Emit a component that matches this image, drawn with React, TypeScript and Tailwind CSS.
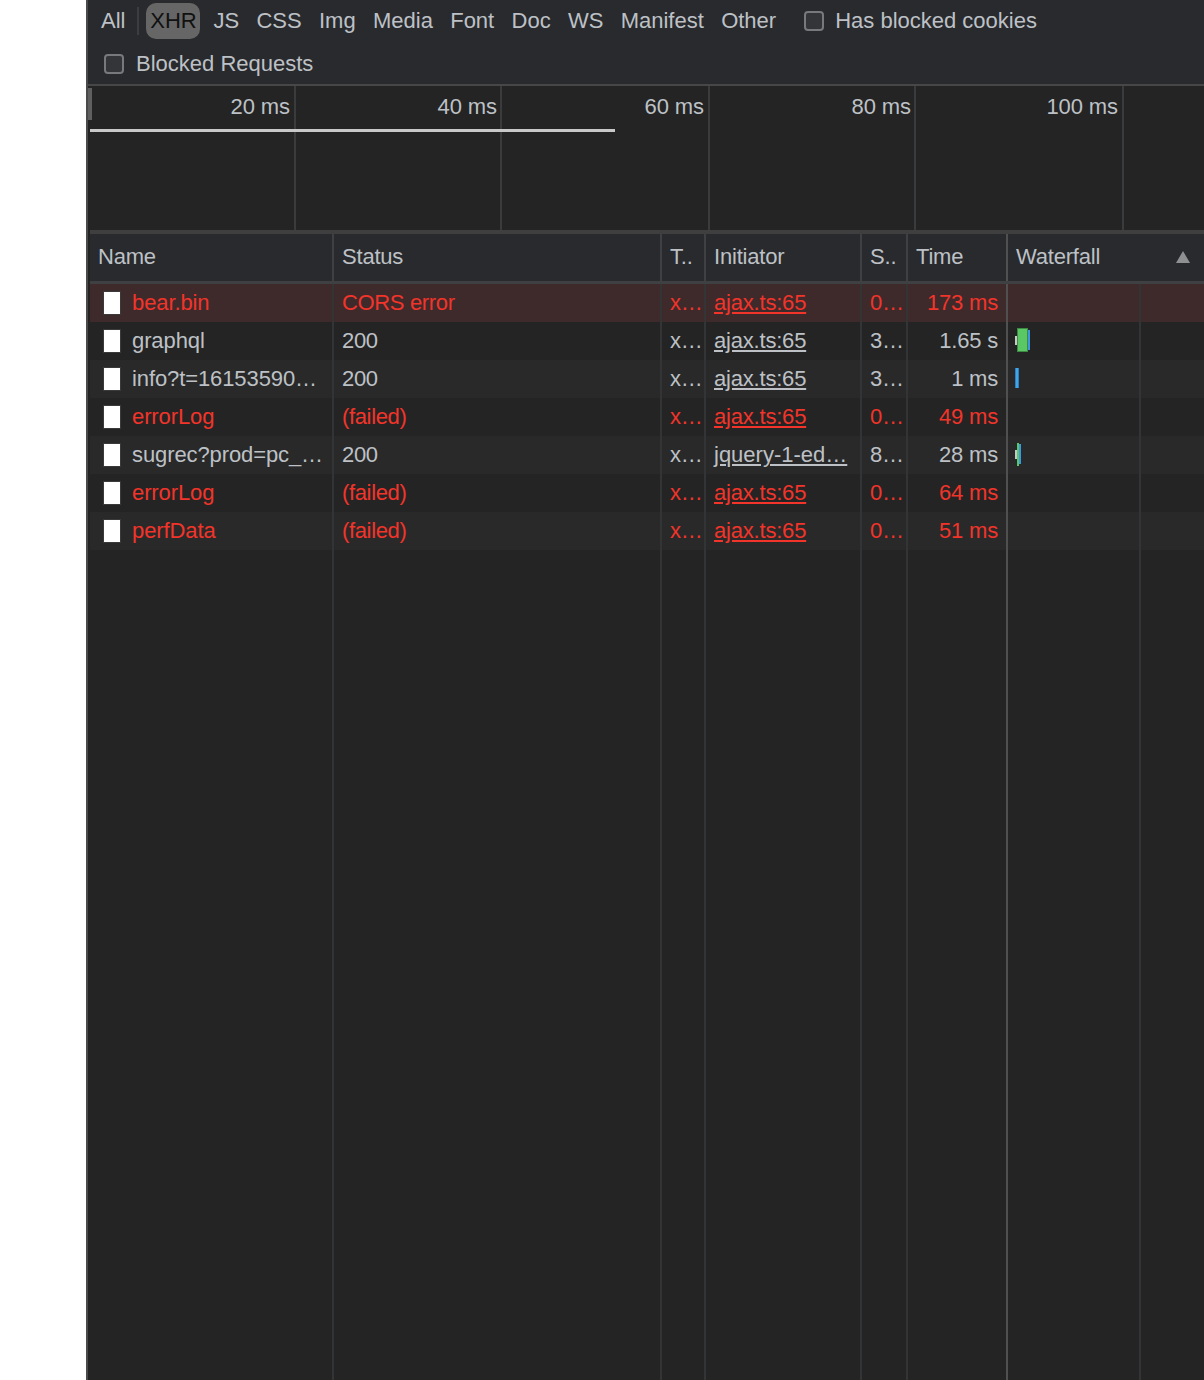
const font = "font-['Liberation_Sans',Arial,sans-serif]";

const filters = ['JS', 'CSS', 'Img', 'Media', 'Font', 'Doc', 'WS', 'Manifest', 'Other'];
const ticks = [
  { label: '20 ms', w: 'w-[206px]', pr: 'pr-[4px]' },
  { label: '40 ms', w: 'w-[206px]', pr: 'pr-[3px]' },
  { label: '60 ms', w: 'w-[208px]', pr: 'pr-[4px]' },
  { label: '80 ms', w: 'w-[206px]', pr: 'pr-[3px]' },
  { label: '100 ms', w: 'w-[208px]', pr: 'pr-[4px]' },
];

const cols = 'grid grid-cols-[244px_328px_44px_156px_46px_100px_1fr]';

const requests = [
  { name: 'bear.bin', status: 'CORS error', type: 'x…', init: 'ajax.ts:65', size: '0…', time: '173 ms', err: true, bar: null },
  { name: 'graphql', status: '200', type: 'x…', init: 'ajax.ts:65', size: '3…', time: '1.65 s', err: false, bar: 'big' },
  { name: 'info?t=16153590…', status: '200', type: 'x…', init: 'ajax.ts:65', size: '3…', time: '1 ms', err: false, bar: 'blue' },
  { name: 'errorLog', status: '(failed)', type: 'x…', init: 'ajax.ts:65', size: '0…', time: '49 ms', err: true, bar: null },
  { name: 'sugrec?prod=pc_…', status: '200', type: 'x…', init: 'jquery-1-ed…', size: '8…', time: '28 ms', err: false, bar: 'thin' },
  { name: 'errorLog', status: '(failed)', type: 'x…', init: 'ajax.ts:65', size: '0…', time: '64 ms', err: true, bar: null },
  { name: 'perfData', status: '(failed)', type: 'x…', init: 'ajax.ts:65', size: '0…', time: '51 ms', err: true, bar: null },
];

function Checkbox() {
  return <span className="w-[20px] h-[20px] rounded-[4px] border-2 border-[#77797c] bg-[#333538]" />;
}

function WaterfallBar({ kind }: { kind: string | null }) {
  if (kind === 'big') {
    return (
      <div className="flex items-center h-full pl-[7px] pb-[2px]">
        <span className="w-[2px] h-[9px] bg-[#c8c8c8]" />
        <span className="w-[11px] h-[24px] bg-[#5ac864] border border-[#3c8a44]" />
        <span className="w-[2px] h-[20px] bg-[#3d98e0]" />
      </div>
    );
  }
  if (kind === 'blue') {
    return (
      <div className="flex items-center h-full pl-[7px] pb-[3px]">
        <span className="w-[4px] h-[20px] bg-[#3fa6ec] border-x border-[#2d7fc0]" />
      </div>
    );
  }
  if (kind === 'thin') {
    return (
      <div className="flex items-center h-full pl-[7px] pb-[2px]">
        <span className="w-[2px] h-[9px] bg-[#c8c8c8]" />
        <span className="w-[2px] h-[23px] bg-[#5ac864]" />
        <span className="w-[2px] h-[20px] bg-[#3d98e0]" />
      </div>
    );
  }
  return null;
}

const cell = 'border-r-2 border-[#333436] px-2 whitespace-nowrap overflow-hidden';
const headCell = 'border-r-2 border-[#3f4042] px-2 pb-[1px] whitespace-nowrap overflow-hidden flex items-center';
const timeCell = 'border-r-2 border-[#505050] px-2 whitespace-nowrap overflow-hidden';

export default function App() {
  return (
    <div className={`${font} flex h-[1380px] w-[1204px] overflow-hidden bg-white text-[22px] leading-none text-[#bdc1c6]`}>
      <div className="w-[86px] shrink-0 bg-white" />
      <div className="flex flex-1 flex-col min-w-0 bg-[#242424] border-l-2 border-[#4a4a4a] pl-[2px]">
        {/* filter bar */}
        <div className="-ml-[2px] h-[86px] shrink-0 bg-[#292a2d] border-b-2 border-[#474747]">
          <div className="flex items-center h-[42px] pl-[13px]">
            <span>All</span>
            <span className="ml-[12px] w-[2px] h-[28px] bg-[#3c3d40]" />
            <span className="ml-[7px] flex items-center justify-center w-[54px] h-[36px] rounded-[10px] bg-[#666666] text-[#111111]">XHR</span>
            <div className="ml-[13px] flex gap-[17.3px]">
              {filters.map((f) => (
                <span key={f}>{f}</span>
              ))}
            </div>
            <div className="ml-[28px] flex items-center gap-[11px]">
              <Checkbox />
              <span>Has blocked cookies</span>
            </div>
          </div>
          <div className="flex items-center h-[42px] pt-[2px] pl-[16px] gap-[12px]">
            <Checkbox />
            <span>Blocked Requests</span>
          </div>
        </div>

        {/* overview */}
        <div className="relative h-[148px] shrink-0 border-b-[4px] border-[#3f3f3f] bg-[#242424] flex">
          <span className="absolute -left-[2px] top-[2px] w-[4px] h-[32px] bg-[#5f5f5f]" />
          {ticks.map((t) => (
            <div key={t.label} className={`${t.w} ${t.pr} shrink-0 border-r-2 border-[#3a3b3d] pt-[10px] text-right tracking-[-0.1px]`}>
              {t.label}
            </div>
          ))}
          <span className="absolute left-0 top-[43px] w-[525px] h-[3px] bg-[#c8c8c8]" />
        </div>

        {/* header */}
        <div className={`${cols} h-[50px] shrink-0 bg-[#292a2d] border-b-[3px] border-[#3f4042] tracking-[-0.2px]`}>
          {['Name', 'Status', 'T..', 'Initiator', 'S..'].map((h) => (
            <div key={h} className={headCell}>{h}</div>
          ))}
          <div className={`${timeCell} pb-[1px] flex items-center`}>Time</div>
          <div className="flex items-center justify-between pl-2 pr-[14px] pb-[1px]">
            <span>Waterfall</span>
            <span className="w-0 h-0 border-x-[7px] border-x-transparent border-b-[12px] border-b-[#8f9092]" />
          </div>
        </div>

        {/* rows */}
        {requests.map((r, i) => (
          <div
            key={i}
            className={`${cols} h-[38px] shrink-0 tracking-[-0.2px] ${r.err ? 'text-[#f2342a]' : ''} ${
              i === 0 ? 'bg-[#3e2a2a]' : i % 2 === 1 ? 'bg-[#242424]' : 'bg-[#292929]'
            }`}
          >
            <div className={`${cell} flex items-center tracking-[-0.1px]`}>
              <span className="ml-[5px] mr-[11px] w-[18px] h-[24px] bg-white border border-[#3a3a3a] shrink-0" />
              <span>{r.name}</span>
            </div>
            <div className={`${cell} flex items-center tracking-[-0.35px]`}>{r.status}</div>
            <div className={`${cell} flex items-center`}>{r.type}</div>
            <div className={`${cell} flex items-center`}>
              <span className={r.bar === 'thin' ? 'underline tracking-normal' : 'underline'}>{r.init}</span>
            </div>
            <div className={`${cell} flex items-center`}>{r.size}</div>
            <div className={`${timeCell} flex items-center justify-end`}>{r.time}</div>
            <div className="relative">
              <WaterfallBar kind={r.bar} />
              <span className="absolute left-[131px] top-0 bottom-0 w-[2px] bg-[#333436]" />
            </div>
          </div>
        ))}

        {/* empty area keeps the column lines */}
        <div className={`${cols} flex-1`}>
          {[0, 1, 2, 3, 4].map((c) => (
            <div key={c} className={cell} />
          ))}
          <div className={timeCell} />
          <div className="relative">
            <span className="absolute left-[131px] top-0 bottom-0 w-[2px] bg-[#333436]" />
          </div>
        </div>
      </div>
    </div>
  );
}
